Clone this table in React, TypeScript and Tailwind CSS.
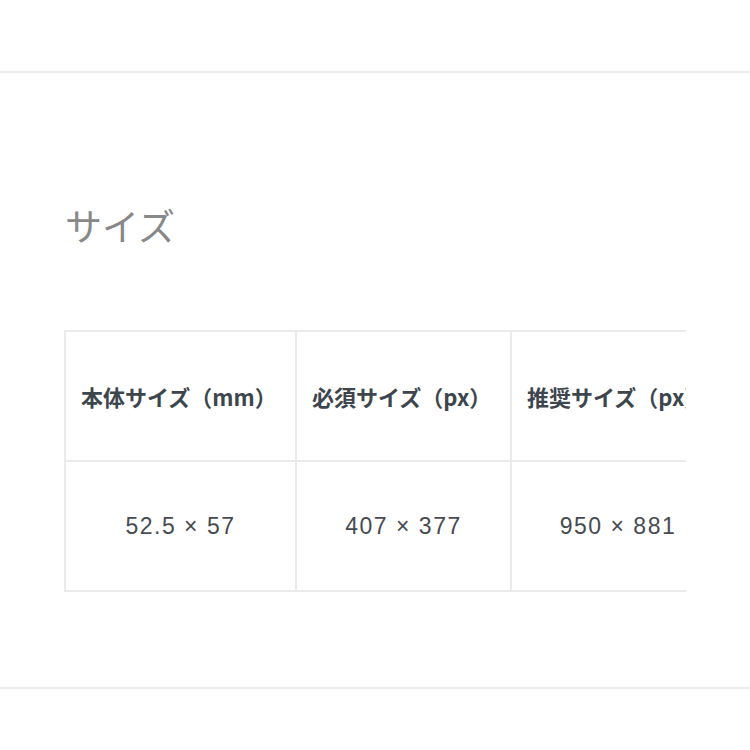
import React from "react";

const headers = ["本体サイズ（mm）", "必須サイズ（px）", "推奨サイズ（px）"];
const values = ["52.5 × 57", "407 × 377", "950 × 881"];
const widths = ["w-[231px]", "w-[215px]", "w-[214px]"];

export default function App() {
  return (
    <div className="w-[750px] h-[750px] bg-white overflow-hidden">
      <div className="h-[71px]" />
      <div className="border-t-2 border-b-2 border-[#ececec] h-[618px] px-[64px]">
        <h2
          className="mt-[134px] ml-px text-[37px] leading-none font-normal text-[#888888]"
          style={{ fontFamily: '"Noto Sans CJK JP", sans-serif' }}
        >
          サイズ
        </h2>

        {/* table is wider than its box and gets cut at the right */}
        <div className="mt-[86px] w-[622px] overflow-hidden">
          <table className="border-collapse table-fixed w-[660px]">
            <tbody>
              <tr>
                {headers.map((h, i) => (
                  <td
                    key={h}
                    className={`${widths[i]} h-[130px] border-2 border-[#ebebeb] px-[15px] align-middle whitespace-nowrap text-[22px] font-bold text-[#3d454d]`}
                    style={{ fontFamily: '"Noto Sans CJK JP", sans-serif' }}
                  >
                    {h}
                  </td>
                ))}
              </tr>
              <tr>
                {values.map((v, i) => (
                  <td
                    key={v}
                    className={`${widths[i]} h-[130px] border-2 border-[#ebebeb] text-center align-middle whitespace-nowrap text-[23px] tracking-[1.5px] text-[#474b50]`}
                    style={{ fontFamily: '"Liberation Sans", Arial, sans-serif' }}
                  >
                    {v}
                  </td>
                ))}
              </tr>
            </tbody>
          </table>
        </div>
      </div>
    </div>
  );
}
